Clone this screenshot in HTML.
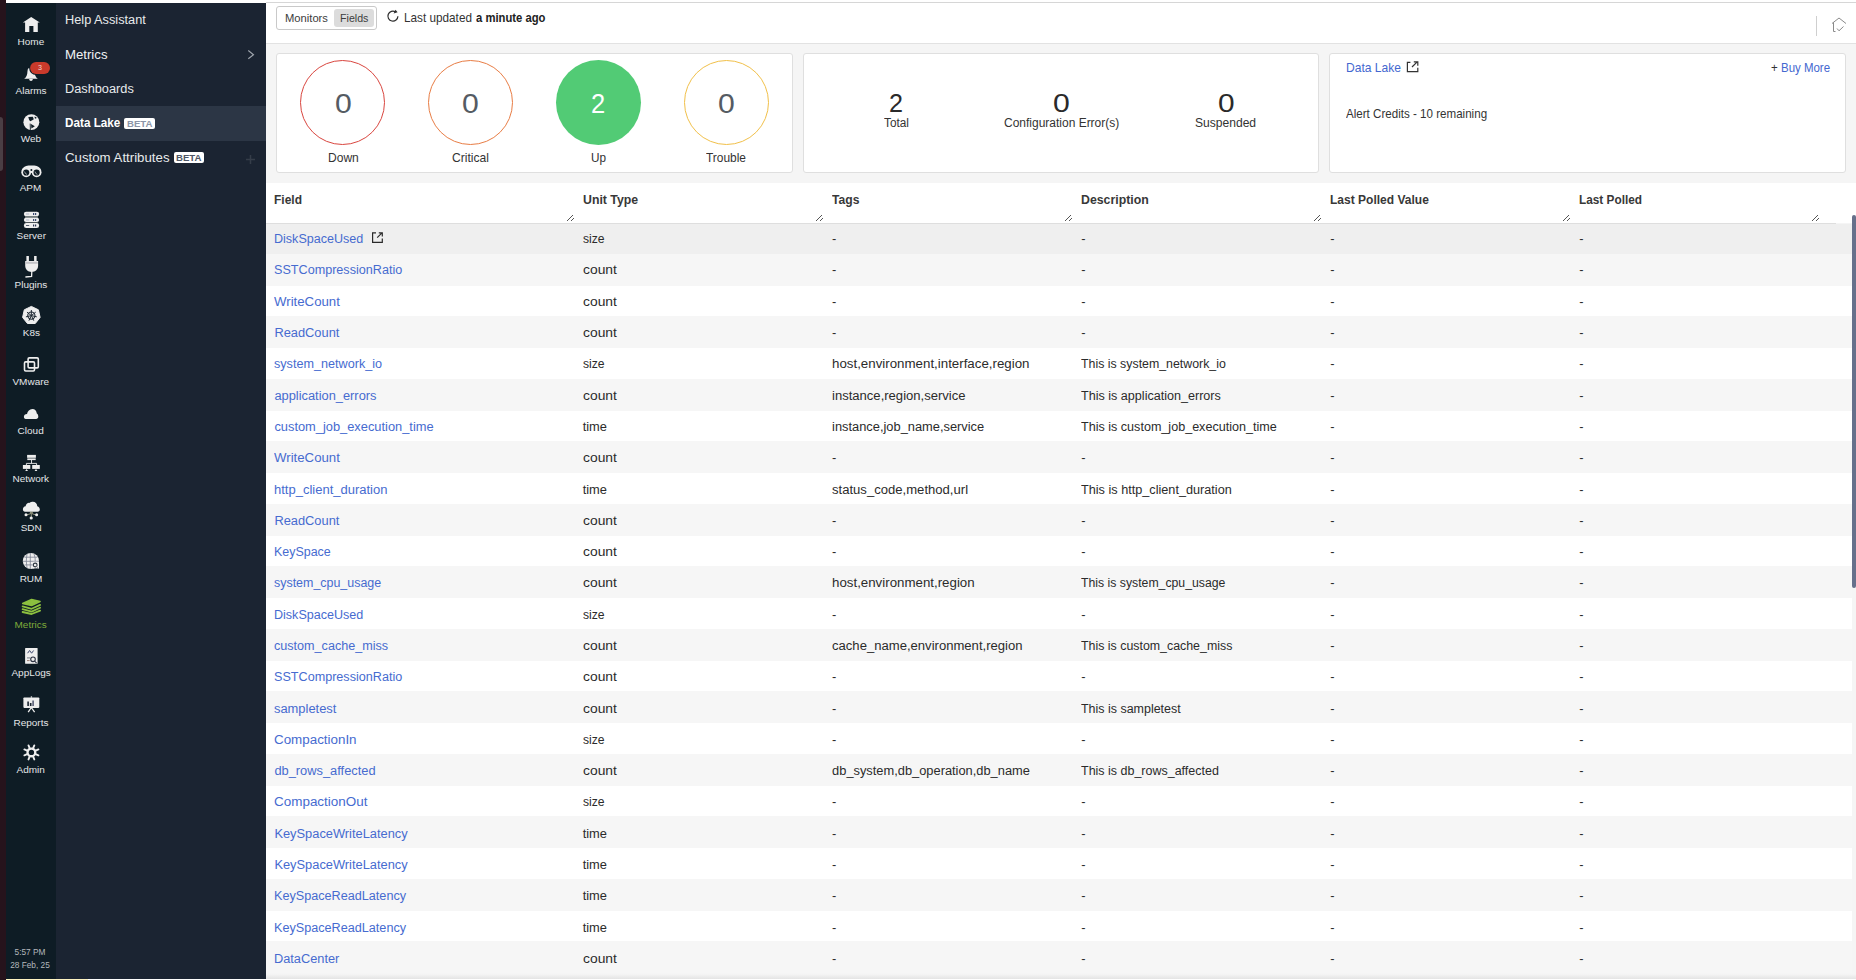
<!DOCTYPE html>
<html><head><meta charset="utf-8">
<style>
*{box-sizing:border-box;margin:0;padding:0}
html,body{width:1856px;height:980px;overflow:hidden;background:#fff;font-family:"Liberation Sans",sans-serif}
.a{position:absolute}
.t{position:absolute;white-space:pre}
svg{position:absolute;overflow:visible}
</style></head><body>
<!-- backgrounds -->
<div class="a" style="left:0;top:0;width:6px;height:980px;background:#26131c"></div>
<div class="a" style="left:0;top:116.5px;width:3px;height:54.5px;background:#4a3e44;border-radius:0 3px 3px 0"></div>
<div class="a" style="left:6px;top:3px;width:50px;height:975.5px;background:#0e1c25"></div>
<div class="a" style="left:56px;top:3px;width:210px;height:975.5px;background:#1b2432"></div>
<div class="a" style="left:56px;top:106.2px;width:210px;height:34.5px;background:#2c3645"></div>
<div class="a" style="left:6px;top:978.5px;width:82px;height:2px;background:#fdf3c2"></div>
<!-- main -->
<div class="a" style="left:266px;top:2px;width:1590px;height:1px;background:#d6d6d6"></div>
<div class="a" style="left:266px;top:43px;width:1590px;height:936px;background:#f5f5f5;border-top:1px solid #e2e2e2"></div>
<!-- header toggle -->
<div class="a" style="left:276.3px;top:6.1px;width:100.6px;height:23.6px;border:1px solid #c9c9c9;border-radius:3px;background:#fff"></div>
<div class="a" style="left:334px;top:9px;width:40px;height:17.8px;background:#dcdcdc;border-radius:3px"></div>

<div class="a" style="left:1816px;top:16px;width:1px;height:20px;background:#cfcfcf"></div>
<svg style="left:1831px;top:17px" width="16" height="16" viewBox="0 0 16 16"><path d="M1 6.5 L8 1 L15 6.5" fill="none" stroke="#8a8a8a" stroke-width="1"/><path d="M2.5 5.5 V14.5 H4.5" fill="none" stroke="#8a8a8a" stroke-width="1"/><path d="M6 11.5 L8 13.8 L12.5 9.5" fill="none" stroke="#8a8a8a" stroke-width="1"/></svg>
<!-- cards -->
<div class="a" style="left:276px;top:53px;width:517px;height:120px;background:#fff;border:1px solid #dfdfdf;border-radius:3px"></div>
<div class="a" style="left:803px;top:53px;width:516px;height:120px;background:#fff;border:1px solid #dfdfdf;border-radius:3px"></div>
<div class="a" style="left:1329px;top:53px;width:517px;height:120px;background:#fff;border:1px solid #dfdfdf;border-radius:3px"></div>
<div class="a" style="left:300px;top:60px;width:85px;height:85px;border-radius:50%;border:1.3px solid #d9463f"></div>
<div class="a" style="left:427.5px;top:60px;width:85px;height:85px;border-radius:50%;border:1.3px solid #e87d45"></div>
<div class="a" style="left:555.5px;top:60px;width:85px;height:85px;border-radius:50%;background:#52cb75"></div>
<div class="a" style="left:683.5px;top:60px;width:85px;height:85px;border-radius:50%;border:1.3px solid #f1c04a"></div>
<!-- table header -->
<div class="a" style="left:266px;top:183px;width:1590px;height:40px;background:#fff"></div>
<div class="a" style="left:266px;top:223px;width:1570px;height:1px;background:#dedede"></div>
<!-- rows -->
<div class="a" style="left:266px;top:224.00px;width:1586px;height:29.55px;background:#efefef"></div>
<div class="a" style="left:266px;top:253.55px;width:1586px;height:32.25px;background:#f6f6f6"></div>
<div class="a" style="left:266px;top:285.80px;width:1586px;height:30.25px;background:#ffffff"></div>
<div class="a" style="left:266px;top:316.05px;width:1586px;height:32.25px;background:#f6f6f6"></div>
<div class="a" style="left:266px;top:348.30px;width:1586px;height:30.25px;background:#ffffff"></div>
<div class="a" style="left:266px;top:378.55px;width:1586px;height:32.25px;background:#f6f6f6"></div>
<div class="a" style="left:266px;top:410.80px;width:1586px;height:30.25px;background:#ffffff"></div>
<div class="a" style="left:266px;top:441.05px;width:1586px;height:32.25px;background:#f6f6f6"></div>
<div class="a" style="left:266px;top:473.30px;width:1586px;height:30.25px;background:#ffffff"></div>
<div class="a" style="left:266px;top:503.55px;width:1586px;height:32.25px;background:#f6f6f6"></div>
<div class="a" style="left:266px;top:535.80px;width:1586px;height:30.25px;background:#ffffff"></div>
<div class="a" style="left:266px;top:566.05px;width:1586px;height:32.25px;background:#f6f6f6"></div>
<div class="a" style="left:266px;top:598.30px;width:1586px;height:30.25px;background:#ffffff"></div>
<div class="a" style="left:266px;top:628.55px;width:1586px;height:32.25px;background:#f6f6f6"></div>
<div class="a" style="left:266px;top:660.80px;width:1586px;height:30.25px;background:#ffffff"></div>
<div class="a" style="left:266px;top:691.05px;width:1586px;height:32.25px;background:#f6f6f6"></div>
<div class="a" style="left:266px;top:723.30px;width:1586px;height:30.25px;background:#ffffff"></div>
<div class="a" style="left:266px;top:753.55px;width:1586px;height:32.25px;background:#f6f6f6"></div>
<div class="a" style="left:266px;top:785.80px;width:1586px;height:30.25px;background:#ffffff"></div>
<div class="a" style="left:266px;top:816.05px;width:1586px;height:32.25px;background:#f6f6f6"></div>
<div class="a" style="left:266px;top:848.30px;width:1586px;height:30.25px;background:#ffffff"></div>
<div class="a" style="left:266px;top:878.55px;width:1586px;height:32.25px;background:#f6f6f6"></div>
<div class="a" style="left:266px;top:910.80px;width:1586px;height:30.25px;background:#ffffff"></div>
<div class="a" style="left:266px;top:941.05px;width:1586px;height:32.25px;background:#f6f6f6"></div>
<!-- scrollbar -->
<div class="a" style="left:1852px;top:215px;width:4px;height:373px;background:#66708b;border-radius:2px"></div>
<div class="a" style="left:123.9px;top:117.9px;width:31.1px;height:10.9px;background:#fff;border-radius:2px"></div>
<div class="a" style="left:173.9px;top:152.3px;width:30.1px;height:10.5px;background:#fff;border-radius:2px"></div>
<span class="t" style="left:18.06px;top:37.00px;font-size:9.70px;line-height:9.70px;font-weight:normal;color:#e4e6e8;transform:scaleX(1.03);transform-origin:50% 0">Home</span>
<span class="t" style="left:15.91px;top:86.00px;font-size:9.70px;line-height:9.70px;font-weight:normal;color:#e4e6e8;transform:scaleX(1.03);transform-origin:50% 0">Alarms</span>
<span class="t" style="left:21.12px;top:134.00px;font-size:9.70px;line-height:9.70px;font-weight:normal;color:#e4e6e8;transform:scaleX(1.03);transform-origin:50% 0">Web</span>
<span class="t" style="left:20.49px;top:183.00px;font-size:9.70px;line-height:9.70px;font-weight:normal;color:#e4e6e8;transform:scaleX(1.03);transform-origin:50% 0">APM</span>
<span class="t" style="left:16.72px;top:231.00px;font-size:9.70px;line-height:9.70px;font-weight:normal;color:#e4e6e8;transform:scaleX(1.03);transform-origin:50% 0">Server</span>
<span class="t" style="left:15.09px;top:280.00px;font-size:9.70px;line-height:9.70px;font-weight:normal;color:#e4e6e8;transform:scaleX(1.03);transform-origin:50% 0">Plugins</span>
<span class="t" style="left:22.64px;top:328.00px;font-size:9.70px;line-height:9.70px;font-weight:normal;color:#e4e6e8;transform:scaleX(1.03);transform-origin:50% 0">K8s</span>
<span class="t" style="left:13.21px;top:377.00px;font-size:9.70px;line-height:9.70px;font-weight:normal;color:#e4e6e8;transform:scaleX(1.03);transform-origin:50% 0">VMware</span>
<span class="t" style="left:18.33px;top:426.00px;font-size:9.70px;line-height:9.70px;font-weight:normal;color:#e4e6e8;transform:scaleX(1.03);transform-origin:50% 0">Cloud</span>
<span class="t" style="left:13.21px;top:474.00px;font-size:9.70px;line-height:9.70px;font-weight:normal;color:#e4e6e8;transform:scaleX(1.03);transform-origin:50% 0">Network</span>
<span class="t" style="left:20.76px;top:523.00px;font-size:9.70px;line-height:9.70px;font-weight:normal;color:#e4e6e8;transform:scaleX(1.03);transform-origin:50% 0">SDN</span>
<span class="t" style="left:19.95px;top:574.00px;font-size:9.70px;line-height:9.70px;font-weight:normal;color:#e4e6e8;transform:scaleX(1.03);transform-origin:50% 0">RUM</span>
<span class="t" style="left:15.37px;top:620.00px;font-size:9.70px;line-height:9.70px;font-weight:normal;color:#7eaa3a;transform:scaleX(1.03);transform-origin:50% 0">Metrics</span>
<span class="t" style="left:11.85px;top:668.00px;font-size:9.70px;line-height:9.70px;font-weight:normal;color:#e4e6e8;transform:scaleX(1.03);transform-origin:50% 0">AppLogs</span>
<span class="t" style="left:14.02px;top:718.00px;font-size:9.70px;line-height:9.70px;font-weight:normal;color:#e4e6e8;transform:scaleX(1.03);transform-origin:50% 0">Reports</span>
<span class="t" style="left:17.25px;top:765.00px;font-size:9.70px;line-height:9.70px;font-weight:normal;color:#e4e6e8;transform:scaleX(1.03);transform-origin:50% 0">Admin</span>
<span class="t" style="left:14.54px;top:948.00px;font-size:8.30px;line-height:8.30px;font-weight:normal;color:#b4b8bc">5:57 PM</span>
<span class="t" style="left:10.16px;top:961.00px;font-size:8.30px;line-height:8.30px;font-weight:normal;color:#b4b8bc">28 Feb, 25</span>
<span class="t" style="left:64.60px;top:14.00px;font-size:12.85px;line-height:12.85px;font-weight:normal;color:#e8eaec;transform:scaleX(0.9924);transform-origin:0 0">Help Assistant</span>
<span class="t" style="left:64.60px;top:48.00px;font-size:13.13px;line-height:13.13px;font-weight:normal;color:#f0f2f4;transform:scaleX(1.0047);transform-origin:0 0">Metrics</span>
<span class="t" style="left:64.60px;top:83.00px;font-size:12.85px;line-height:12.85px;font-weight:normal;color:#e8eaec;transform:scaleX(0.9930);transform-origin:0 0">Dashboards</span>
<span class="t" style="left:64.50px;top:117.00px;font-size:12.57px;line-height:12.57px;font-weight:bold;color:#ffffff;transform:scaleX(0.9328);transform-origin:0 0">Data Lake</span>
<span class="t" style="left:64.50px;top:152.00px;font-size:12.29px;line-height:12.29px;font-weight:normal;color:#e8eaec;transform:scaleX(1.0784);transform-origin:0 0">Custom Attributes</span>
<span class="t" style="left:126.70px;top:120.00px;font-size:9.36px;line-height:9.36px;font-weight:bold;color:#8c95a8;transform:scaleX(1.0291);transform-origin:0 0">BETA</span>
<span class="t" style="left:175.90px;top:153.00px;font-size:9.78px;line-height:9.78px;font-weight:bold;color:#4e5665;transform:scaleX(0.9850);transform-origin:0 0">BETA</span>
<span class="t" style="left:285.20px;top:13.00px;font-size:11.31px;line-height:11.31px;font-weight:normal;color:#3c3c3c;transform:scaleX(0.9913);transform-origin:0 0">Monitors</span>
<span class="t" style="left:340.30px;top:13.00px;font-size:11.31px;line-height:11.31px;font-weight:normal;color:#3c3c3c;transform:scaleX(0.9444);transform-origin:0 0">Fields</span>
<span class="t" style="left:404.40px;top:12.00px;font-size:12.15px;line-height:12.15px;font-weight:normal;color:#333;transform:scaleX(0.9678);transform-origin:0 0">Last updated</span>
<span class="t" style="left:475.50px;top:12.00px;font-size:12.15px;line-height:12.15px;font-weight:bold;color:#222;transform:scaleX(0.9274);transform-origin:0 0">a minute ago</span>
<span class="t" style="left:327.60px;top:151.00px;font-size:13.27px;line-height:13.27px;font-weight:normal;color:#333;transform:scaleX(0.9079);transform-origin:0 0">Down</span>
<span class="t" style="left:452.00px;top:151.00px;font-size:13.27px;line-height:13.27px;font-weight:normal;color:#333;transform:scaleX(0.9126);transform-origin:0 0">Critical</span>
<span class="t" style="left:590.70px;top:151.00px;font-size:13.27px;line-height:13.27px;font-weight:normal;color:#333;transform:scaleX(0.8843);transform-origin:0 0">Up</span>
<span class="t" style="left:706.00px;top:151.00px;font-size:13.27px;line-height:13.27px;font-weight:normal;color:#333;transform:scaleX(0.8990);transform-origin:0 0">Trouble</span>
<span class="t" style="left:334.70px;top:90.00px;font-size:27.09px;line-height:27.09px;font-weight:normal;color:#555b63;transform:scaleX(1.1147);transform-origin:0 0">0</span>
<span class="t" style="left:462.20px;top:90.00px;font-size:27.09px;line-height:27.09px;font-weight:normal;color:#555b63;transform:scaleX(1.1147);transform-origin:0 0">0</span>
<span class="t" style="left:717.70px;top:90.00px;font-size:27.09px;line-height:27.09px;font-weight:normal;color:#555b63;transform:scaleX(1.1147);transform-origin:0 0">0</span>
<span class="t" style="left:590.80px;top:90.00px;font-size:27.93px;line-height:27.93px;font-weight:normal;color:#ffffff;transform:scaleX(0.9139);transform-origin:0 0">2</span>
<span class="t" style="left:888.80px;top:90.00px;font-size:26.54px;line-height:26.54px;font-weight:normal;color:#2a2a2a;transform:scaleX(0.9485);transform-origin:0 0">2</span>
<span class="t" style="left:1052.80px;top:90.00px;font-size:26.54px;line-height:26.54px;font-weight:normal;color:#2a2a2a;transform:scaleX(1.1381);transform-origin:0 0">0</span>
<span class="t" style="left:1217.70px;top:90.00px;font-size:26.54px;line-height:26.54px;font-weight:normal;color:#2a2a2a;transform:scaleX(1.1246);transform-origin:0 0">0</span>
<span class="t" style="left:883.90px;top:117.00px;font-size:12.85px;line-height:12.85px;font-weight:normal;color:#333;transform:scaleX(0.9211);transform-origin:0 0">Total</span>
<span class="t" style="left:1003.55px;top:117.00px;font-size:12.85px;line-height:12.85px;font-weight:normal;color:#333;transform:scaleX(0.9333);transform-origin:0 0">Configuration Error(s)</span>
<span class="t" style="left:1195.35px;top:117.00px;font-size:12.85px;line-height:12.85px;font-weight:normal;color:#333;transform:scaleX(0.9397);transform-origin:0 0">Suspended</span>
<span class="t" style="left:1346.00px;top:62.00px;font-size:12.43px;line-height:12.43px;font-weight:normal;color:#4468d0;transform:scaleX(0.9706);transform-origin:0 0">Data Lake</span>
<span class="t" style="left:1771.00px;top:62.00px;font-size:12.00px;line-height:12.00px;font-weight:normal;color:#333;transform:scaleX(0.9559);transform-origin:0 0">+</span>
<span class="t" style="left:1780.90px;top:62.00px;font-size:12.29px;line-height:12.29px;font-weight:normal;color:#4468d0;transform:scaleX(0.9335);transform-origin:0 0">Buy More</span>
<span class="t" style="left:1345.90px;top:107.00px;font-size:13.55px;line-height:13.55px;font-weight:normal;color:#333;transform:scaleX(0.8557);transform-origin:0 0">Alert Credits - 10 remaining</span>
<span class="t" style="left:274.20px;top:194.00px;font-size:12.71px;line-height:12.71px;font-weight:bold;color:#383838;transform:scaleX(0.9441);transform-origin:0 0">Field</span>
<span class="t" style="left:582.80px;top:194.00px;font-size:12.71px;line-height:12.71px;font-weight:bold;color:#383838;transform:scaleX(0.9691);transform-origin:0 0">Unit Type</span>
<span class="t" style="left:832.00px;top:194.00px;font-size:12.71px;line-height:12.71px;font-weight:bold;color:#383838;transform:scaleX(0.9540);transform-origin:0 0">Tags</span>
<span class="t" style="left:1080.90px;top:194.00px;font-size:12.71px;line-height:12.71px;font-weight:bold;color:#383838;transform:scaleX(0.9697);transform-origin:0 0">Description</span>
<span class="t" style="left:1330.10px;top:194.00px;font-size:12.71px;line-height:12.71px;font-weight:bold;color:#383838;transform:scaleX(0.9461);transform-origin:0 0">Last Polled Value</span>
<span class="t" style="left:1578.90px;top:194.00px;font-size:12.71px;line-height:12.71px;font-weight:bold;color:#383838;transform:scaleX(0.9307);transform-origin:0 0">Last Polled</span>
<span class="t" style="left:274.40px;top:233.00px;font-size:12.85px;line-height:12.85px;font-weight:normal;color:#466bd0;transform:scaleX(0.9763);transform-origin:0 0">DiskSpaceUsed</span>
<span class="t" style="left:582.70px;top:233.00px;font-size:12.85px;line-height:12.85px;font-weight:normal;color:#2b2b2b;transform:scaleX(0.9452);transform-origin:0 0">size</span>
<span class="t" style="left:832.10px;top:233.00px;font-size:12.85px;line-height:12.85px;font-weight:normal;color:#2b2b2b">-</span>
<span class="t" style="left:1081.20px;top:233.00px;font-size:12.85px;line-height:12.85px;font-weight:normal;color:#2b2b2b">-</span>
<span class="t" style="left:1330.30px;top:233.00px;font-size:12.85px;line-height:12.85px;font-weight:normal;color:#2b2b2b">-</span>
<span class="t" style="left:1579.20px;top:233.00px;font-size:12.85px;line-height:12.85px;font-weight:normal;color:#2b2b2b">-</span>
<span class="t" style="left:274.40px;top:264.00px;font-size:12.85px;line-height:12.85px;font-weight:normal;color:#466bd0;transform:scaleX(0.9818);transform-origin:0 0">SSTCompressionRatio</span>
<span class="t" style="left:582.70px;top:264.00px;font-size:12.85px;line-height:12.85px;font-weight:normal;color:#2b2b2b;transform:scaleX(1.0784);transform-origin:0 0">count</span>
<span class="t" style="left:832.10px;top:264.00px;font-size:12.85px;line-height:12.85px;font-weight:normal;color:#2b2b2b">-</span>
<span class="t" style="left:1081.20px;top:264.00px;font-size:12.85px;line-height:12.85px;font-weight:normal;color:#2b2b2b">-</span>
<span class="t" style="left:1330.30px;top:264.00px;font-size:12.85px;line-height:12.85px;font-weight:normal;color:#2b2b2b">-</span>
<span class="t" style="left:1579.20px;top:264.00px;font-size:12.85px;line-height:12.85px;font-weight:normal;color:#2b2b2b">-</span>
<span class="t" style="left:274.40px;top:296.00px;font-size:12.85px;line-height:12.85px;font-weight:normal;color:#466bd0;transform:scaleX(1.0292);transform-origin:0 0">WriteCount</span>
<span class="t" style="left:582.70px;top:296.00px;font-size:12.85px;line-height:12.85px;font-weight:normal;color:#2b2b2b;transform:scaleX(1.0784);transform-origin:0 0">count</span>
<span class="t" style="left:832.10px;top:296.00px;font-size:12.85px;line-height:12.85px;font-weight:normal;color:#2b2b2b">-</span>
<span class="t" style="left:1081.20px;top:296.00px;font-size:12.85px;line-height:12.85px;font-weight:normal;color:#2b2b2b">-</span>
<span class="t" style="left:1330.30px;top:296.00px;font-size:12.85px;line-height:12.85px;font-weight:normal;color:#2b2b2b">-</span>
<span class="t" style="left:1579.20px;top:296.00px;font-size:12.85px;line-height:12.85px;font-weight:normal;color:#2b2b2b">-</span>
<span class="t" style="left:274.40px;top:327.00px;font-size:12.85px;line-height:12.85px;font-weight:normal;color:#466bd0">ReadCount</span>
<span class="t" style="left:582.70px;top:327.00px;font-size:12.85px;line-height:12.85px;font-weight:normal;color:#2b2b2b;transform:scaleX(1.0784);transform-origin:0 0">count</span>
<span class="t" style="left:832.10px;top:327.00px;font-size:12.85px;line-height:12.85px;font-weight:normal;color:#2b2b2b">-</span>
<span class="t" style="left:1081.20px;top:327.00px;font-size:12.85px;line-height:12.85px;font-weight:normal;color:#2b2b2b">-</span>
<span class="t" style="left:1330.30px;top:327.00px;font-size:12.85px;line-height:12.85px;font-weight:normal;color:#2b2b2b">-</span>
<span class="t" style="left:1579.20px;top:327.00px;font-size:12.85px;line-height:12.85px;font-weight:normal;color:#2b2b2b">-</span>
<span class="t" style="left:274.40px;top:358.00px;font-size:12.85px;line-height:12.85px;font-weight:normal;color:#466bd0;transform:scaleX(0.9829);transform-origin:0 0">system_network_io</span>
<span class="t" style="left:582.70px;top:358.00px;font-size:12.85px;line-height:12.85px;font-weight:normal;color:#2b2b2b;transform:scaleX(0.9452);transform-origin:0 0">size</span>
<span class="t" style="left:832.10px;top:358.00px;font-size:12.85px;line-height:12.85px;font-weight:normal;color:#2b2b2b;transform:scaleX(1.0362);transform-origin:0 0">host,environment,interface,region</span>
<span class="t" style="left:1081.20px;top:358.00px;font-size:12.85px;line-height:12.85px;font-weight:normal;color:#2b2b2b;transform:scaleX(0.9617);transform-origin:0 0">This is system_network_io</span>
<span class="t" style="left:1330.30px;top:358.00px;font-size:12.85px;line-height:12.85px;font-weight:normal;color:#2b2b2b">-</span>
<span class="t" style="left:1579.20px;top:358.00px;font-size:12.85px;line-height:12.85px;font-weight:normal;color:#2b2b2b">-</span>
<span class="t" style="left:274.40px;top:390.00px;font-size:12.85px;line-height:12.85px;font-weight:normal;color:#466bd0">application_errors</span>
<span class="t" style="left:582.70px;top:390.00px;font-size:12.85px;line-height:12.85px;font-weight:normal;color:#2b2b2b;transform:scaleX(1.0784);transform-origin:0 0">count</span>
<span class="t" style="left:832.10px;top:390.00px;font-size:12.85px;line-height:12.85px;font-weight:normal;color:#2b2b2b;transform:scaleX(1.0166);transform-origin:0 0">instance,region,service</span>
<span class="t" style="left:1081.20px;top:390.00px;font-size:12.85px;line-height:12.85px;font-weight:normal;color:#2b2b2b;transform:scaleX(0.9795);transform-origin:0 0">This is application_errors</span>
<span class="t" style="left:1330.30px;top:390.00px;font-size:12.85px;line-height:12.85px;font-weight:normal;color:#2b2b2b">-</span>
<span class="t" style="left:1579.20px;top:390.00px;font-size:12.85px;line-height:12.85px;font-weight:normal;color:#2b2b2b">-</span>
<span class="t" style="left:274.40px;top:421.00px;font-size:12.85px;line-height:12.85px;font-weight:normal;color:#466bd0">custom_job_execution_time</span>
<span class="t" style="left:582.70px;top:421.00px;font-size:12.85px;line-height:12.85px;font-weight:normal;color:#2b2b2b">time</span>
<span class="t" style="left:832.10px;top:421.00px;font-size:12.85px;line-height:12.85px;font-weight:normal;color:#2b2b2b">instance,job_name,service</span>
<span class="t" style="left:1081.20px;top:421.00px;font-size:12.85px;line-height:12.85px;font-weight:normal;color:#2b2b2b;transform:scaleX(0.9791);transform-origin:0 0">This is custom_job_execution_time</span>
<span class="t" style="left:1330.30px;top:421.00px;font-size:12.85px;line-height:12.85px;font-weight:normal;color:#2b2b2b">-</span>
<span class="t" style="left:1579.20px;top:421.00px;font-size:12.85px;line-height:12.85px;font-weight:normal;color:#2b2b2b">-</span>
<span class="t" style="left:274.40px;top:452.00px;font-size:12.85px;line-height:12.85px;font-weight:normal;color:#466bd0;transform:scaleX(1.0292);transform-origin:0 0">WriteCount</span>
<span class="t" style="left:582.70px;top:452.00px;font-size:12.85px;line-height:12.85px;font-weight:normal;color:#2b2b2b;transform:scaleX(1.0784);transform-origin:0 0">count</span>
<span class="t" style="left:832.10px;top:452.00px;font-size:12.85px;line-height:12.85px;font-weight:normal;color:#2b2b2b">-</span>
<span class="t" style="left:1081.20px;top:452.00px;font-size:12.85px;line-height:12.85px;font-weight:normal;color:#2b2b2b">-</span>
<span class="t" style="left:1330.30px;top:452.00px;font-size:12.85px;line-height:12.85px;font-weight:normal;color:#2b2b2b">-</span>
<span class="t" style="left:1579.20px;top:452.00px;font-size:12.85px;line-height:12.85px;font-weight:normal;color:#2b2b2b">-</span>
<span class="t" style="left:274.40px;top:484.00px;font-size:12.85px;line-height:12.85px;font-weight:normal;color:#466bd0;transform:scaleX(1.0120);transform-origin:0 0">http_client_duration</span>
<span class="t" style="left:582.70px;top:484.00px;font-size:12.85px;line-height:12.85px;font-weight:normal;color:#2b2b2b">time</span>
<span class="t" style="left:832.10px;top:484.00px;font-size:12.85px;line-height:12.85px;font-weight:normal;color:#2b2b2b;transform:scaleX(1.0189);transform-origin:0 0">status_code,method,url</span>
<span class="t" style="left:1081.20px;top:484.00px;font-size:12.85px;line-height:12.85px;font-weight:normal;color:#2b2b2b;transform:scaleX(0.9866);transform-origin:0 0">This is http_client_duration</span>
<span class="t" style="left:1330.30px;top:484.00px;font-size:12.85px;line-height:12.85px;font-weight:normal;color:#2b2b2b">-</span>
<span class="t" style="left:1579.20px;top:484.00px;font-size:12.85px;line-height:12.85px;font-weight:normal;color:#2b2b2b">-</span>
<span class="t" style="left:274.40px;top:515.00px;font-size:12.85px;line-height:12.85px;font-weight:normal;color:#466bd0">ReadCount</span>
<span class="t" style="left:582.70px;top:515.00px;font-size:12.85px;line-height:12.85px;font-weight:normal;color:#2b2b2b;transform:scaleX(1.0784);transform-origin:0 0">count</span>
<span class="t" style="left:832.10px;top:515.00px;font-size:12.85px;line-height:12.85px;font-weight:normal;color:#2b2b2b">-</span>
<span class="t" style="left:1081.20px;top:515.00px;font-size:12.85px;line-height:12.85px;font-weight:normal;color:#2b2b2b">-</span>
<span class="t" style="left:1330.30px;top:515.00px;font-size:12.85px;line-height:12.85px;font-weight:normal;color:#2b2b2b">-</span>
<span class="t" style="left:1579.20px;top:515.00px;font-size:12.85px;line-height:12.85px;font-weight:normal;color:#2b2b2b">-</span>
<span class="t" style="left:274.40px;top:546.00px;font-size:12.85px;line-height:12.85px;font-weight:normal;color:#466bd0;transform:scaleX(0.9680);transform-origin:0 0">KeySpace</span>
<span class="t" style="left:582.70px;top:546.00px;font-size:12.85px;line-height:12.85px;font-weight:normal;color:#2b2b2b;transform:scaleX(1.0784);transform-origin:0 0">count</span>
<span class="t" style="left:832.10px;top:546.00px;font-size:12.85px;line-height:12.85px;font-weight:normal;color:#2b2b2b">-</span>
<span class="t" style="left:1081.20px;top:546.00px;font-size:12.85px;line-height:12.85px;font-weight:normal;color:#2b2b2b">-</span>
<span class="t" style="left:1330.30px;top:546.00px;font-size:12.85px;line-height:12.85px;font-weight:normal;color:#2b2b2b">-</span>
<span class="t" style="left:1579.20px;top:546.00px;font-size:12.85px;line-height:12.85px;font-weight:normal;color:#2b2b2b">-</span>
<span class="t" style="left:274.40px;top:577.00px;font-size:12.85px;line-height:12.85px;font-weight:normal;color:#466bd0;transform:scaleX(0.9683);transform-origin:0 0">system_cpu_usage</span>
<span class="t" style="left:582.70px;top:577.00px;font-size:12.85px;line-height:12.85px;font-weight:normal;color:#2b2b2b;transform:scaleX(1.0784);transform-origin:0 0">count</span>
<span class="t" style="left:832.10px;top:577.00px;font-size:12.85px;line-height:12.85px;font-weight:normal;color:#2b2b2b;transform:scaleX(1.0352);transform-origin:0 0">host,environment,region</span>
<span class="t" style="left:1081.20px;top:577.00px;font-size:12.85px;line-height:12.85px;font-weight:normal;color:#2b2b2b;transform:scaleX(0.9537);transform-origin:0 0">This is system_cpu_usage</span>
<span class="t" style="left:1330.30px;top:577.00px;font-size:12.85px;line-height:12.85px;font-weight:normal;color:#2b2b2b">-</span>
<span class="t" style="left:1579.20px;top:577.00px;font-size:12.85px;line-height:12.85px;font-weight:normal;color:#2b2b2b">-</span>
<span class="t" style="left:274.40px;top:609.00px;font-size:12.85px;line-height:12.85px;font-weight:normal;color:#466bd0;transform:scaleX(0.9763);transform-origin:0 0">DiskSpaceUsed</span>
<span class="t" style="left:582.70px;top:609.00px;font-size:12.85px;line-height:12.85px;font-weight:normal;color:#2b2b2b;transform:scaleX(0.9452);transform-origin:0 0">size</span>
<span class="t" style="left:832.10px;top:609.00px;font-size:12.85px;line-height:12.85px;font-weight:normal;color:#2b2b2b">-</span>
<span class="t" style="left:1081.20px;top:609.00px;font-size:12.85px;line-height:12.85px;font-weight:normal;color:#2b2b2b">-</span>
<span class="t" style="left:1330.30px;top:609.00px;font-size:12.85px;line-height:12.85px;font-weight:normal;color:#2b2b2b">-</span>
<span class="t" style="left:1579.20px;top:609.00px;font-size:12.85px;line-height:12.85px;font-weight:normal;color:#2b2b2b">-</span>
<span class="t" style="left:274.40px;top:640.00px;font-size:12.85px;line-height:12.85px;font-weight:normal;color:#466bd0;transform:scaleX(0.9811);transform-origin:0 0">custom_cache_miss</span>
<span class="t" style="left:582.70px;top:640.00px;font-size:12.85px;line-height:12.85px;font-weight:normal;color:#2b2b2b;transform:scaleX(1.0784);transform-origin:0 0">count</span>
<span class="t" style="left:832.10px;top:640.00px;font-size:12.85px;line-height:12.85px;font-weight:normal;color:#2b2b2b;transform:scaleX(1.0185);transform-origin:0 0">cache_name,environment,region</span>
<span class="t" style="left:1081.20px;top:640.00px;font-size:12.85px;line-height:12.85px;font-weight:normal;color:#2b2b2b;transform:scaleX(0.9637);transform-origin:0 0">This is custom_cache_miss</span>
<span class="t" style="left:1330.30px;top:640.00px;font-size:12.85px;line-height:12.85px;font-weight:normal;color:#2b2b2b">-</span>
<span class="t" style="left:1579.20px;top:640.00px;font-size:12.85px;line-height:12.85px;font-weight:normal;color:#2b2b2b">-</span>
<span class="t" style="left:274.40px;top:671.00px;font-size:12.85px;line-height:12.85px;font-weight:normal;color:#466bd0;transform:scaleX(0.9818);transform-origin:0 0">SSTCompressionRatio</span>
<span class="t" style="left:582.70px;top:671.00px;font-size:12.85px;line-height:12.85px;font-weight:normal;color:#2b2b2b;transform:scaleX(1.0784);transform-origin:0 0">count</span>
<span class="t" style="left:832.10px;top:671.00px;font-size:12.85px;line-height:12.85px;font-weight:normal;color:#2b2b2b">-</span>
<span class="t" style="left:1081.20px;top:671.00px;font-size:12.85px;line-height:12.85px;font-weight:normal;color:#2b2b2b">-</span>
<span class="t" style="left:1330.30px;top:671.00px;font-size:12.85px;line-height:12.85px;font-weight:normal;color:#2b2b2b">-</span>
<span class="t" style="left:1579.20px;top:671.00px;font-size:12.85px;line-height:12.85px;font-weight:normal;color:#2b2b2b">-</span>
<span class="t" style="left:274.40px;top:703.00px;font-size:12.85px;line-height:12.85px;font-weight:normal;color:#466bd0;transform:scaleX(1.0043);transform-origin:0 0">sampletest</span>
<span class="t" style="left:582.70px;top:703.00px;font-size:12.85px;line-height:12.85px;font-weight:normal;color:#2b2b2b;transform:scaleX(1.0784);transform-origin:0 0">count</span>
<span class="t" style="left:832.10px;top:703.00px;font-size:12.85px;line-height:12.85px;font-weight:normal;color:#2b2b2b">-</span>
<span class="t" style="left:1081.20px;top:703.00px;font-size:12.85px;line-height:12.85px;font-weight:normal;color:#2b2b2b;transform:scaleX(0.9696);transform-origin:0 0">This is sampletest</span>
<span class="t" style="left:1330.30px;top:703.00px;font-size:12.85px;line-height:12.85px;font-weight:normal;color:#2b2b2b">-</span>
<span class="t" style="left:1579.20px;top:703.00px;font-size:12.85px;line-height:12.85px;font-weight:normal;color:#2b2b2b">-</span>
<span class="t" style="left:274.40px;top:734.00px;font-size:12.85px;line-height:12.85px;font-weight:normal;color:#466bd0;transform:scaleX(1.0419);transform-origin:0 0">CompactionIn</span>
<span class="t" style="left:582.70px;top:734.00px;font-size:12.85px;line-height:12.85px;font-weight:normal;color:#2b2b2b;transform:scaleX(0.9452);transform-origin:0 0">size</span>
<span class="t" style="left:832.10px;top:734.00px;font-size:12.85px;line-height:12.85px;font-weight:normal;color:#2b2b2b">-</span>
<span class="t" style="left:1081.20px;top:734.00px;font-size:12.85px;line-height:12.85px;font-weight:normal;color:#2b2b2b">-</span>
<span class="t" style="left:1330.30px;top:734.00px;font-size:12.85px;line-height:12.85px;font-weight:normal;color:#2b2b2b">-</span>
<span class="t" style="left:1579.20px;top:734.00px;font-size:12.85px;line-height:12.85px;font-weight:normal;color:#2b2b2b">-</span>
<span class="t" style="left:274.40px;top:765.00px;font-size:12.85px;line-height:12.85px;font-weight:normal;color:#466bd0">db_rows_affected</span>
<span class="t" style="left:582.70px;top:765.00px;font-size:12.85px;line-height:12.85px;font-weight:normal;color:#2b2b2b;transform:scaleX(1.0784);transform-origin:0 0">count</span>
<span class="t" style="left:832.10px;top:765.00px;font-size:12.85px;line-height:12.85px;font-weight:normal;color:#2b2b2b">db_system,db_operation,db_name</span>
<span class="t" style="left:1081.20px;top:765.00px;font-size:12.85px;line-height:12.85px;font-weight:normal;color:#2b2b2b;transform:scaleX(0.9719);transform-origin:0 0">This is db_rows_affected</span>
<span class="t" style="left:1330.30px;top:765.00px;font-size:12.85px;line-height:12.85px;font-weight:normal;color:#2b2b2b">-</span>
<span class="t" style="left:1579.20px;top:765.00px;font-size:12.85px;line-height:12.85px;font-weight:normal;color:#2b2b2b">-</span>
<span class="t" style="left:274.40px;top:796.00px;font-size:12.85px;line-height:12.85px;font-weight:normal;color:#466bd0;transform:scaleX(1.0473);transform-origin:0 0">CompactionOut</span>
<span class="t" style="left:582.70px;top:796.00px;font-size:12.85px;line-height:12.85px;font-weight:normal;color:#2b2b2b;transform:scaleX(0.9452);transform-origin:0 0">size</span>
<span class="t" style="left:832.10px;top:796.00px;font-size:12.85px;line-height:12.85px;font-weight:normal;color:#2b2b2b">-</span>
<span class="t" style="left:1081.20px;top:796.00px;font-size:12.85px;line-height:12.85px;font-weight:normal;color:#2b2b2b">-</span>
<span class="t" style="left:1330.30px;top:796.00px;font-size:12.85px;line-height:12.85px;font-weight:normal;color:#2b2b2b">-</span>
<span class="t" style="left:1579.20px;top:796.00px;font-size:12.85px;line-height:12.85px;font-weight:normal;color:#2b2b2b">-</span>
<span class="t" style="left:274.40px;top:828.00px;font-size:12.85px;line-height:12.85px;font-weight:normal;color:#466bd0">KeySpaceWriteLatency</span>
<span class="t" style="left:582.70px;top:828.00px;font-size:12.85px;line-height:12.85px;font-weight:normal;color:#2b2b2b">time</span>
<span class="t" style="left:832.10px;top:828.00px;font-size:12.85px;line-height:12.85px;font-weight:normal;color:#2b2b2b">-</span>
<span class="t" style="left:1081.20px;top:828.00px;font-size:12.85px;line-height:12.85px;font-weight:normal;color:#2b2b2b">-</span>
<span class="t" style="left:1330.30px;top:828.00px;font-size:12.85px;line-height:12.85px;font-weight:normal;color:#2b2b2b">-</span>
<span class="t" style="left:1579.20px;top:828.00px;font-size:12.85px;line-height:12.85px;font-weight:normal;color:#2b2b2b">-</span>
<span class="t" style="left:274.40px;top:859.00px;font-size:12.85px;line-height:12.85px;font-weight:normal;color:#466bd0">KeySpaceWriteLatency</span>
<span class="t" style="left:582.70px;top:859.00px;font-size:12.85px;line-height:12.85px;font-weight:normal;color:#2b2b2b">time</span>
<span class="t" style="left:832.10px;top:859.00px;font-size:12.85px;line-height:12.85px;font-weight:normal;color:#2b2b2b">-</span>
<span class="t" style="left:1081.20px;top:859.00px;font-size:12.85px;line-height:12.85px;font-weight:normal;color:#2b2b2b">-</span>
<span class="t" style="left:1330.30px;top:859.00px;font-size:12.85px;line-height:12.85px;font-weight:normal;color:#2b2b2b">-</span>
<span class="t" style="left:1579.20px;top:859.00px;font-size:12.85px;line-height:12.85px;font-weight:normal;color:#2b2b2b">-</span>
<span class="t" style="left:274.40px;top:890.00px;font-size:12.85px;line-height:12.85px;font-weight:normal;color:#466bd0;transform:scaleX(0.9836);transform-origin:0 0">KeySpaceReadLatency</span>
<span class="t" style="left:582.70px;top:890.00px;font-size:12.85px;line-height:12.85px;font-weight:normal;color:#2b2b2b">time</span>
<span class="t" style="left:832.10px;top:890.00px;font-size:12.85px;line-height:12.85px;font-weight:normal;color:#2b2b2b">-</span>
<span class="t" style="left:1081.20px;top:890.00px;font-size:12.85px;line-height:12.85px;font-weight:normal;color:#2b2b2b">-</span>
<span class="t" style="left:1330.30px;top:890.00px;font-size:12.85px;line-height:12.85px;font-weight:normal;color:#2b2b2b">-</span>
<span class="t" style="left:1579.20px;top:890.00px;font-size:12.85px;line-height:12.85px;font-weight:normal;color:#2b2b2b">-</span>
<span class="t" style="left:274.40px;top:922.00px;font-size:12.85px;line-height:12.85px;font-weight:normal;color:#466bd0;transform:scaleX(0.9836);transform-origin:0 0">KeySpaceReadLatency</span>
<span class="t" style="left:582.70px;top:922.00px;font-size:12.85px;line-height:12.85px;font-weight:normal;color:#2b2b2b">time</span>
<span class="t" style="left:832.10px;top:922.00px;font-size:12.85px;line-height:12.85px;font-weight:normal;color:#2b2b2b">-</span>
<span class="t" style="left:1081.20px;top:922.00px;font-size:12.85px;line-height:12.85px;font-weight:normal;color:#2b2b2b">-</span>
<span class="t" style="left:1330.30px;top:922.00px;font-size:12.85px;line-height:12.85px;font-weight:normal;color:#2b2b2b">-</span>
<span class="t" style="left:1579.20px;top:922.00px;font-size:12.85px;line-height:12.85px;font-weight:normal;color:#2b2b2b">-</span>
<span class="t" style="left:274.40px;top:953.00px;font-size:12.85px;line-height:12.85px;font-weight:normal;color:#466bd0;transform:scaleX(0.9938);transform-origin:0 0">DataCenter</span>
<span class="t" style="left:582.70px;top:953.00px;font-size:12.85px;line-height:12.85px;font-weight:normal;color:#2b2b2b;transform:scaleX(1.0784);transform-origin:0 0">count</span>
<span class="t" style="left:832.10px;top:953.00px;font-size:12.85px;line-height:12.85px;font-weight:normal;color:#2b2b2b">-</span>
<span class="t" style="left:1081.20px;top:953.00px;font-size:12.85px;line-height:12.85px;font-weight:normal;color:#2b2b2b">-</span>
<span class="t" style="left:1330.30px;top:953.00px;font-size:12.85px;line-height:12.85px;font-weight:normal;color:#2b2b2b">-</span>
<span class="t" style="left:1579.20px;top:953.00px;font-size:12.85px;line-height:12.85px;font-weight:normal;color:#2b2b2b">-</span>

<svg style="left:0;top:0" width="1856" height="980" viewBox="0 0 1856 980">
<!-- home -->
<path d="M22.9 22.6 L31.2 16.9 L39.8 22.6 L37.8 22.6 L37.8 32.1 L33.4 32.1 L33.4 26 L29.3 26 L29.3 32.1 L25.1 32.1 L25.1 22.6 Z" fill="#eeeeee"/>
<!-- bell -->
<path d="M24.2 78.8 C26.5 77 27.3 75 27.5 71 C27.7 68.5 29 67.6 31 67.6 C33 67.6 34.3 68.5 34.5 71 C34.7 75 35.5 77 37.8 78.8 Z" fill="#eeeeee"/>
<path d="M29.2 79 L32.8 79 C32.8 80.3 32 81 31 81 C30 81 29.2 80.3 29.2 79 Z" fill="#eeeeee"/>
<rect x="29.1" y="61" width="21.9" height="13.9" rx="6.9" fill="#0e1c25"/>
<rect x="30.1" y="62" width="19.9" height="11.9" rx="5.9" fill="#c93a2b"/>
<!-- web globe -->
<circle cx="31.35" cy="122.15" r="7.95" fill="#eeeeee"/>
<path d="M28.3 117 L32.8 116.8 L33.8 119.2 L31.8 120.6 L30.2 121.3 L29.2 120 Z" fill="#0e1c25"/>
<path d="M34.6 116.6 L36.6 117.6 L36 118.8 L34.8 118.2 Z" fill="#0e1c25"/>
<path d="M31 124 L34.8 126.2 L31.4 128.6 Z" fill="#0e1c25"/>
<path d="M30.2 123.6 L30.4 129.8" stroke="#0e1c25" stroke-width="0.9"/>
<!-- apm binoculars -->
<circle cx="26.2" cy="172.3" r="4.9" fill="#eeeeee"/>
<circle cx="36.6" cy="172.3" r="4.9" fill="#eeeeee"/>
<path d="M21.6 170.5 C22.5 167.5 25 165.6 28.5 165.4 L34.3 165.4 C37.8 165.6 40.3 167.5 41.2 170.5 L31.4 173 Z" fill="#eeeeee"/>
<path d="M29.6 177.6 Q31.4 172.6 33.2 177.6 Z" fill="#0e1c25"/>
<circle cx="26.2" cy="172.5" r="3.1" fill="#0e1c25"/>
<circle cx="36.6" cy="172.5" r="3.1" fill="#0e1c25"/>
<circle cx="31.4" cy="170.1" r="1" fill="#0e1c25"/>
<path d="M24.6 171.6 Q24.9 173.8 27 174.4" stroke="#cfcfcf" stroke-width="0.7" fill="none"/>
<path d="M35 171.6 Q35.3 173.8 37.4 174.4" stroke="#cfcfcf" stroke-width="0.7" fill="none"/>
<!-- server -->
<rect x="23.9" y="211.7" width="15.2" height="4.5" rx="2.2" fill="#eeeeee"/>
<rect x="25" y="216.2" width="13" height="1.6" fill="#7f8888"/>
<rect x="23.9" y="217.8" width="15.2" height="4.3" rx="2.1" fill="#eeeeee"/>
<rect x="25" y="222.1" width="13" height="0.8" fill="#5c6466"/>
<rect x="23.9" y="222.9" width="15.2" height="5.2" rx="2.4" fill="#eeeeee"/>
<rect x="26" y="213.2" width="3.2" height="1.6" fill="#c8ccd8"/>
<rect x="26" y="219.2" width="3.2" height="1.6" fill="#c8ccd8"/>
<rect x="26" y="225" width="3.2" height="1" fill="#556070"/>
<rect x="33" y="213" width="1.2" height="2" fill="#3a4a70"/><rect x="35" y="213" width="1.2" height="2" fill="#3a4a70"/>
<rect x="33" y="219" width="1.2" height="2" fill="#3a4a70"/><rect x="35" y="219" width="1.2" height="2" fill="#3a4a70"/>
<rect x="33" y="224.5" width="1.2" height="2" fill="#2a3450"/><rect x="35" y="224.5" width="1.2" height="2" fill="#2a3450"/>
<!-- plugin -->
<rect x="26.4" y="256" width="2.5" height="5.2" fill="#eeeeee"/>
<rect x="34.1" y="256" width="2.5" height="5.2" fill="#eeeeee"/>
<path d="M25.2 261 L38.1 261 L38.1 265.5 C38.1 269.5 35.3 271.9 31.6 271.9 C27.9 271.9 25.2 269.5 25.2 265.5 Z" fill="#eeeeee"/>
<rect x="25.5" y="261.8" width="12.3" height="2" fill="#c4c4c8"/>
<path d="M31.8 271.5 L31.6 276.4 L25.4 277" stroke="#eeeeee" stroke-width="1.3" fill="none"/>
<!-- k8s -->
<polygon points="31.35,306.40 38.39,309.79 40.12,317.40 35.25,323.51 27.45,323.51 22.58,317.40 24.31,309.79" fill="#eeeeee" stroke="#eeeeee" stroke-width="1" stroke-linejoin="round"/>
<circle cx="31.35" cy="315.6" r="3.6" fill="none" stroke="#1f2a34" stroke-width="1.1"/><line x1="31.35" y1="315.6" x2="31.35" y2="310.00" stroke="#1f2a34" stroke-width="1"/><line x1="31.35" y1="315.6" x2="35.73" y2="312.11" stroke="#1f2a34" stroke-width="1"/><line x1="31.35" y1="315.6" x2="36.81" y2="316.85" stroke="#1f2a34" stroke-width="1"/><line x1="31.35" y1="315.6" x2="33.78" y2="320.65" stroke="#1f2a34" stroke-width="1"/><line x1="31.35" y1="315.6" x2="28.92" y2="320.65" stroke="#1f2a34" stroke-width="1"/><line x1="31.35" y1="315.6" x2="25.89" y2="316.85" stroke="#1f2a34" stroke-width="1"/><line x1="31.35" y1="315.6" x2="26.97" y2="312.11" stroke="#1f2a34" stroke-width="1"/>
<!-- vmware -->
<rect x="28.1" y="357.9" width="10.2" height="10" rx="1.2" fill="none" stroke="#eeeeee" stroke-width="1.6"/>
<rect x="24.5" y="361.9" width="10" height="9.1" rx="1.2" fill="none" stroke="#eeeeee" stroke-width="1.6"/>
<!-- cloud -->
<path d="M25.8 418.9 C24.4 418.9 23.9 417.8 23.9 416.8 C23.9 415.2 25 414 27 414 C27.6 411.5 29.6 409.1 32.3 409.1 C35 409.1 36.6 411 36.8 413.5 C37.9 414 38.3 415.3 38.3 416.6 C38.3 417.9 37.6 418.9 36.4 418.9 Z" fill="#eeeeee"/>
<!-- network -->
<rect x="27.1" y="454.9" width="8.8" height="2.9" fill="#eeeeee"/>
<rect x="27.3" y="458.4" width="8.4" height="1.7" fill="#eeeeee"/>
<path d="M31.5 460 L31.5 463.3 M26.4 465 L26.4 463.4 L36.6 463.4 L36.6 465" stroke="#eeeeee" stroke-width="0.9" fill="none"/>
<rect x="22.9" y="465" width="7.4" height="3.9" fill="#eeeeee"/>
<rect x="32.2" y="465" width="7.6" height="3.9" fill="#eeeeee"/>
<path d="M25.2 471 L26.6 468.9 L28 471 Z M34.6 471 L36 468.9 L37.4 471 Z" fill="#eeeeee"/>
<!-- sdn -->
<path d="M25 511.7 C23.6 511.7 22.9 510.5 22.9 509.3 C22.9 507.6 24 506.4 25.6 506.2 C26 503.9 27.7 502.6 29.6 502.9 C30.6 501.9 31.8 501.7 32.9 501.7 C35.3 501.7 37 503.4 37.3 506.2 C38.9 506.8 39.8 507.9 39.8 509.5 C39.8 510.8 39 511.7 37.7 511.7 Z" fill="#eeeeee"/>
<path d="M30.4 511.7 L30.4 513.8 L27 514.8 M31.3 511.7 L31.3 517 M32.3 511.7 L32.3 513.8 L35.5 514.8" stroke="#c9c6a0" stroke-width="0.7" fill="none"/>
<circle cx="26" cy="514.8" r="1.5" fill="#eeeeee"/>
<circle cx="36.6" cy="514.8" r="1.5" fill="#eeeeee"/>
<circle cx="31.2" cy="518" r="1.6" fill="#eeeeee"/>
<!-- rum -->
<circle cx="30.9" cy="561" r="8.1" fill="#eeeeee"/>
<path d="M22.8 561.3 H39 M24.5 557.2 H37.3 M24.5 564.9 H33 M30.3 553 V569 M27 554 Q25.5 561 27 568 M34 554 Q35.6 558 35.2 561" stroke="#7a8090" stroke-width="0.8" fill="none"/>
<rect x="32.8" y="561.8" width="6.2" height="6.6" fill="#eeeeee"/>
<circle cx="35.2" cy="565" r="1.9" fill="none" stroke="#2a3440" stroke-width="1.1"/>
<path d="M36.6 566.5 L38.8 568.8" stroke="#9aa0a8" stroke-width="1" />
<!-- metrics layers -->
<path d="M22.6 603.5 L31.6 599.5 L40.1 601.5 L31.6 605.6 Z" fill="#8cc03f" stroke="#8cc03f" stroke-width="1.4" stroke-linejoin="round"/>
<path d="M22.6 606.3 L31.6 608.8 L40.1 604.9" stroke="#8cc03f" stroke-width="1.8" fill="none" stroke-linejoin="round" stroke-linecap="round"/>
<path d="M22.6 609.2 L31.6 611.6 L40.1 607.8" stroke="#8cc03f" stroke-width="1.8" fill="none" stroke-linejoin="round" stroke-linecap="round"/>
<path d="M22.6 612.0 L31.6 614.0 L40.1 610.6" stroke="#8cc03f" stroke-width="1.8" fill="none" stroke-linejoin="round" stroke-linecap="round"/>
<!-- applogs -->
<rect x="25.1" y="647.9" width="12.5" height="15.9" rx="0.6" fill="#eeeeee"/>
<path d="M27.6 653.2 L29.6 650.5 L31.6 653.2 L33.6 650.5" stroke="#404a70" stroke-width="1" fill="none"/>
<rect x="27" y="657.3" width="3" height="1.2" fill="#8a8f98"/>
<rect x="27" y="660.1" width="2.6" height="1" fill="#9a7a70"/>
<circle cx="33" cy="659.3" r="2.3" fill="none" stroke="#2a3040" stroke-width="1.1"/>
<path d="M34.6 661 L36.6 663.2" stroke="#2a3040" stroke-width="1.1"/>
<!-- reports -->
<rect x="23.4" y="697.4" width="15.9" height="10.5" rx="0.8" fill="#eeeeee"/>
<rect x="27.3" y="701.5" width="1.6" height="4.5" fill="#1a2430"/>
<rect x="29.9" y="703" width="1.6" height="3" fill="#1a2430"/>
<rect x="32.3" y="700.5" width="1.6" height="5.5" fill="#5a6078"/>
<path d="M31.3 707.5 L28.2 712.2 M31.3 707.5 L34.6 712.2" stroke="#eeeeee" stroke-width="1.3" fill="none"/>
<circle cx="31.4" cy="697" r="0.8" fill="#eeeeee"/>
<!-- admin gear -->
<line x1="35.10" y1="753.93" x2="38.42" y2="755.31" stroke="#eeeeee" stroke-width="1.9" stroke-linecap="round"/><line x1="32.93" y1="756.10" x2="34.31" y2="759.42" stroke="#eeeeee" stroke-width="1.9" stroke-linecap="round"/><line x1="29.87" y1="756.10" x2="28.49" y2="759.42" stroke="#eeeeee" stroke-width="1.9" stroke-linecap="round"/><line x1="27.70" y1="753.93" x2="24.38" y2="755.31" stroke="#eeeeee" stroke-width="1.9" stroke-linecap="round"/><line x1="27.70" y1="750.87" x2="24.38" y2="749.49" stroke="#eeeeee" stroke-width="1.9" stroke-linecap="round"/><line x1="29.87" y1="748.70" x2="28.49" y2="745.38" stroke="#eeeeee" stroke-width="1.9" stroke-linecap="round"/><line x1="32.93" y1="748.70" x2="34.31" y2="745.38" stroke="#eeeeee" stroke-width="1.9" stroke-linecap="round"/><line x1="35.10" y1="750.87" x2="38.42" y2="749.49" stroke="#eeeeee" stroke-width="1.9" stroke-linecap="round"/><circle cx="31.4" cy="752.4" r="3.85" fill="none" stroke="#eeeeee" stroke-width="2.30"/>
</svg>

<div class="a" style="left:567px;top:220px;width:1px;height:1px;background:#555"></div><div class="a" style="left:568px;top:219px;width:1px;height:1px;background:#555"></div><div class="a" style="left:569px;top:218px;width:1px;height:1px;background:#555"></div><div class="a" style="left:570px;top:217px;width:1px;height:1px;background:#555"></div><div class="a" style="left:571px;top:216px;width:1px;height:1px;background:#555"></div><div class="a" style="left:572px;top:215px;width:1px;height:1px;background:#555"></div><div class="a" style="left:571px;top:220px;width:1px;height:1px;background:#555"></div><div class="a" style="left:572px;top:219px;width:1px;height:1px;background:#555"></div><div class="a" style="left:573px;top:218px;width:1px;height:1px;background:#555"></div><div class="a" style="left:816px;top:220px;width:1px;height:1px;background:#555"></div><div class="a" style="left:817px;top:219px;width:1px;height:1px;background:#555"></div><div class="a" style="left:818px;top:218px;width:1px;height:1px;background:#555"></div><div class="a" style="left:819px;top:217px;width:1px;height:1px;background:#555"></div><div class="a" style="left:820px;top:216px;width:1px;height:1px;background:#555"></div><div class="a" style="left:821px;top:215px;width:1px;height:1px;background:#555"></div><div class="a" style="left:820px;top:220px;width:1px;height:1px;background:#555"></div><div class="a" style="left:821px;top:219px;width:1px;height:1px;background:#555"></div><div class="a" style="left:822px;top:218px;width:1px;height:1px;background:#555"></div><div class="a" style="left:1065px;top:220px;width:1px;height:1px;background:#555"></div><div class="a" style="left:1066px;top:219px;width:1px;height:1px;background:#555"></div><div class="a" style="left:1067px;top:218px;width:1px;height:1px;background:#555"></div><div class="a" style="left:1068px;top:217px;width:1px;height:1px;background:#555"></div><div class="a" style="left:1069px;top:216px;width:1px;height:1px;background:#555"></div><div class="a" style="left:1070px;top:215px;width:1px;height:1px;background:#555"></div><div class="a" style="left:1069px;top:220px;width:1px;height:1px;background:#555"></div><div class="a" style="left:1070px;top:219px;width:1px;height:1px;background:#555"></div><div class="a" style="left:1071px;top:218px;width:1px;height:1px;background:#555"></div><div class="a" style="left:1314px;top:220px;width:1px;height:1px;background:#555"></div><div class="a" style="left:1315px;top:219px;width:1px;height:1px;background:#555"></div><div class="a" style="left:1316px;top:218px;width:1px;height:1px;background:#555"></div><div class="a" style="left:1317px;top:217px;width:1px;height:1px;background:#555"></div><div class="a" style="left:1318px;top:216px;width:1px;height:1px;background:#555"></div><div class="a" style="left:1319px;top:215px;width:1px;height:1px;background:#555"></div><div class="a" style="left:1318px;top:220px;width:1px;height:1px;background:#555"></div><div class="a" style="left:1319px;top:219px;width:1px;height:1px;background:#555"></div><div class="a" style="left:1320px;top:218px;width:1px;height:1px;background:#555"></div><div class="a" style="left:1563px;top:220px;width:1px;height:1px;background:#555"></div><div class="a" style="left:1564px;top:219px;width:1px;height:1px;background:#555"></div><div class="a" style="left:1565px;top:218px;width:1px;height:1px;background:#555"></div><div class="a" style="left:1566px;top:217px;width:1px;height:1px;background:#555"></div><div class="a" style="left:1567px;top:216px;width:1px;height:1px;background:#555"></div><div class="a" style="left:1568px;top:215px;width:1px;height:1px;background:#555"></div><div class="a" style="left:1567px;top:220px;width:1px;height:1px;background:#555"></div><div class="a" style="left:1568px;top:219px;width:1px;height:1px;background:#555"></div><div class="a" style="left:1569px;top:218px;width:1px;height:1px;background:#555"></div><div class="a" style="left:1812px;top:220px;width:1px;height:1px;background:#555"></div><div class="a" style="left:1813px;top:219px;width:1px;height:1px;background:#555"></div><div class="a" style="left:1814px;top:218px;width:1px;height:1px;background:#555"></div><div class="a" style="left:1815px;top:217px;width:1px;height:1px;background:#555"></div><div class="a" style="left:1816px;top:216px;width:1px;height:1px;background:#555"></div><div class="a" style="left:1817px;top:215px;width:1px;height:1px;background:#555"></div><div class="a" style="left:1816px;top:220px;width:1px;height:1px;background:#555"></div><div class="a" style="left:1817px;top:219px;width:1px;height:1px;background:#555"></div><div class="a" style="left:1818px;top:218px;width:1px;height:1px;background:#555"></div>
<!-- bottom shadow -->
<div class="a" style="left:266px;top:974px;width:1590px;height:5px;background:linear-gradient(#f5f5f5,#e4e4e4)"></div>
<div class="a" style="left:88px;top:979px;width:1768px;height:1px;background:#ffffff"></div>
<!-- BETA badges -->
<svg style="left:0;top:0" width="1856" height="980" viewBox="0 0 1856 980">
<path d="M248.3 50.5 L253.5 54.7 L248.3 58.8" fill="none" stroke="#a0a6ae" stroke-width="1.1"/>
<path d="M250.5 155 V164 M246 159.5 H255" stroke="#353d49" stroke-width="1.5"/>
<!-- ext link row1 -->
<path d="M376 232.9 H372.6 V242.3 H382.3 V238.6" fill="none" stroke="#2a2a2a" stroke-width="1.2"/>
<path d="M377.2 237.7 L382 232.9 M378.8 232.9 H382.3 V236.4" fill="none" stroke="#2a2a2a" stroke-width="1.2"/>
<!-- ext link card -->
<path d="M1410.4 62.4 H1407.4 V71.6 H1417.8 V67.8" fill="none" stroke="#333" stroke-width="1.2"/>
<path d="M1412 67 L1417.2 61.8 M1413.8 61.9 H1417.8 V65.8" fill="none" stroke="#333" stroke-width="1.2"/>
<path d="M397.9 16.2 A5 5 0 1 1 395.6 11.9" fill="none" stroke="#2e2e2e" stroke-width="1.25"/>
<path d="M395.5 9.7 L397.6 12.3 L393.6 13.4 Z" fill="#2e2e2e"/>
<text x="40" y="70.1" font-family="Liberation Sans" font-size="7.2" fill="#f3d6d0" text-anchor="middle">3</text>
</svg>

</body></html>
